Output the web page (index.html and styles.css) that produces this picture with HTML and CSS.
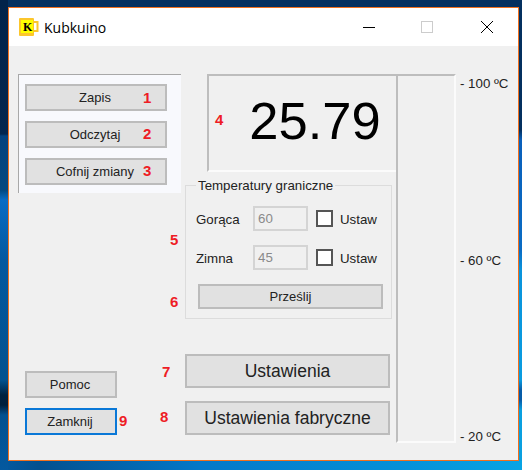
FILE: index.html
```html
<!DOCTYPE html>
<html>
<head>
  <meta charset="UTF-8">
  <title>Kubkuino</title>
  <link rel="stylesheet" href="styles.css">
</head>
<body>
  <div class="window">
    <div class="titlebar">
      <svg class="app-icon" width="20" height="18" viewBox="0 0 20 18">
        <path d="M14 4h4.5v9H14" fill="none" stroke="#fcc62c" stroke-width="2"/>
        <rect x="0" y="0" width="15" height="18" rx="1" fill="#fcc62c"/>
        <rect x="2" y="2" width="12" height="13" fill="#ffff00"/>
      </svg>
      <span class="app-letter">K</span>
      <span class="title">Kubkuino</span>
      <div class="controls">
        <svg width="58" height="14" viewBox="0 0 58 14"><path d="M0 7.5h12" stroke="#000" fill="none"/></svg>
        <svg width="59" height="14" viewBox="0 0 59 14"><rect x="0.5" y="1.5" width="11" height="11" stroke="#ccc" fill="none"/></svg>
        <svg width="14" height="14" viewBox="0 0 14 14"><path d="M1 1l12 12M13 1L1 13" stroke="#000" fill="none"/></svg>
      </div>
    </div>

    <div class="client">
      <div class="left-col">
        <div class="file-panel">
          <button class="btn">Zapis</button>
          <button class="btn">Odczytaj</button>
          <button class="btn">Cofnij zmiany</button>
        </div>
        <div class="help-btns">
          <button class="btn btn-small">Pomoc</button>
          <button class="btn btn-small btn-focus">Zamknij</button>
        </div>
      </div>

      <div class="mid-col">
        <div class="display">25.79</div>
        <fieldset class="limits">
          <legend>Temperatury graniczne</legend>
          <div class="limit-row">
            <label class="row-name">Gorąca</label>
            <div class="fake-input">60</div>
            <span class="check"></span>
            <span class="check-text">Ustaw</span>
          </div>
          <div class="limit-row">
            <label class="row-name">Zimna</label>
            <div class="fake-input">45</div>
            <span class="check"></span>
            <span class="check-text">Ustaw</span>
          </div>
          <button class="btn btn-send">Prześlij</button>
        </fieldset>
        <button class="btn btn-big">Ustawienia</button>
        <button class="btn btn-big">Ustawienia fabryczne</button>
      </div>

      <div class="scale"></div>
      <div class="scale-labels">
        <span>- 100 ºC</span>
        <span>- 60 ºC</span>
        <span>- 20 ºC</span>
      </div>
    </div>

    <!-- red numbers painted over the screenshot -->
    <span class="mark m1">1</span>
    <span class="mark m2">2</span>
    <span class="mark m3">3</span>
    <span class="mark m4">4</span>
    <span class="mark m5">5</span>
    <span class="mark m6">6</span>
    <span class="mark m7">7</span>
    <span class="mark m8">8</span>
    <span class="mark m9">9</span>
  </div>
</body>
</html>
```

FILE: styles.css
```css
html, body {
  margin: 0;
  height: 470px;
  overflow: hidden;
}
/* desktop wallpaper, only the strips round the window show */
body {
  background-color: #04305f;
  background-image:
    linear-gradient(180deg, #02234a 0, #02264e 134px, #03427e 136px, #03487f 190px, #0a6cc4 200px, #04589f 260px, #03528f 380px, #02213f 395px, #021f3c 405px, #03508f 415px, #04599f 470px),
    linear-gradient(90deg, #04599f 0, #03508f 40px, #0478c8 200px, #0590d8 400px, #08a4e4 522px),
    linear-gradient(180deg, #04305f 0, #04305f 130px, #0a60bb 140px, #0a6cc4 250px, #0a94dc 270px, #0a9ce0 380px, #075ca8 390px, #075ca8 400px, #0aa0e0 410px, #0aa0e0 470px);
  background-size: 8px 470px, 522px 9px, 4px 470px;
  background-position: 0 0, 0 461px, 518px 0;
  background-repeat: no-repeat;
  font-family: "Liberation Sans", Arial, sans-serif;
  font-size: 13.3px;
  color: #222;
}
.window {
  position: relative;
  box-sizing: border-box;
  width: 511px;
  height: 454px;
  margin: 7px 0 0 8px;
  border: 1px solid #f0701e;
  background: #f0f0f0;
}

/* title bar */
.titlebar {
  position: relative;
  display: flex;
  align-items: center;
  height: 38px;
  padding-left: 10px;
  background: #fff;
  color: #000;
}
.app-icon {
  margin-right: 5px;
}
.app-letter {
  position: absolute;
  left: 14px;
  top: 12px;
  font-family: "Liberation Serif", serif;
  font-weight: bold;
  font-size: 12px;
}
.title {
  font-family: "Open Sans", sans-serif;
  font-size: 14px;
}
.controls {
  display: flex;
  margin-left: auto;
  margin-right: 24px;
}

/* client area */
.client {
  display: flex;
  height: 414px;
}
.left-col {
  display: flex;
  flex-direction: column;
  width: 176px;
  padding-top: 28px;
  box-sizing: border-box;
}
.file-panel {
  display: flex;
  flex-direction: column;
  gap: 10px;
  box-sizing: border-box;
  width: 163px;
  height: 119px;
  margin-left: 9px;
  padding: 9px 0 0 6px;
  border-top: 1px solid #a8a8a8;
  border-left: 1px solid #a8a8a8;
  background: #f8f9fd;
}
.btn {
  display: block;
  box-sizing: border-box;
  padding: 0;
  border: 2px solid #bcbcbc;
  background: #e1e1e1;
  font-family: inherit;
  font-size: 13px;
  color: #222;
}
.file-panel .btn {
  width: 142px;
  height: 27px;
  padding-right: 2px;
}
.help-btns {
  display: flex;
  flex-direction: column;
  gap: 10px;
  margin: auto 0 0 16px;
  padding-bottom: 25px;
}
.btn-small {
  width: 92px;
  height: 27px;
  padding-right: 2px;
}
.btn-focus {
  border-color: #0a78d7;
}

.mid-col {
  width: 211px;
  padding-top: 28px;
  box-sizing: border-box;
}
.display {
  box-sizing: border-box;
  width: 189px;
  height: 98px;
  margin-left: 22px;
  padding-left: 25px;
  border-top: 2px solid #bdbdbd;
  border-left: 2px solid #bdbdbd;
  border-bottom: 2px solid #fbfbfb;
  font-size: 52.5px;
  line-height: 90px;
  text-align: center;
  color: #000;
}
.limits {
  box-sizing: border-box;
  width: 207px;
  height: 141px;
  margin: 6px 0 0;
  padding: 13px 0 0 10px;
  border: 1px solid #dcdcdc;
}
.limits legend {
  margin-left: 0;
  padding: 0 2px;
  font-size: 13.3px;
}
.limit-row {
  display: flex;
  align-items: center;
  height: 25px;
  margin-bottom: 14px;
}
.row-name {
  width: 57px;
  padding-top: 2px;
}
.check-text {
  padding-top: 2px;
}
.fake-input {
  box-sizing: border-box;
  width: 55px;
  height: 25px;
  margin-right: 8px;
  padding: 3px 0 0 3px;
  border: 2px solid #d4d4d4;
  color: #8a8a8a;
}
.check {
  box-sizing: border-box;
  width: 17px;
  height: 17px;
  margin-right: 7px;
  border: 2px solid #555;
  background: #fff;
}
.btn-send {
  width: 185px;
  height: 25px;
  margin: 1px 0 0 2px;
}
.btn-big {
  width: 205px;
  height: 34px;
  margin-top: 13px;
  font-size: 17.5px;
}
.limits + .btn-big {
  margin-top: 35px;
}

.scale {
  box-sizing: border-box;
  width: 60px;
  height: 369px;
  margin-top: 28px;
  border-top: 2px solid #bdbdbd;
  border-left: 2px solid #bdbdbd;
  border-right: 2px solid #fbfbfb;
  border-bottom: 2px solid #fbfbfb;
}
.scale-labels {
  display: flex;
  flex-direction: column;
  justify-content: space-between;
  height: 368px;
  margin: 30px 0 0 4px;
}

/* annotations */
.mark {
  position: absolute;
  font-weight: bold;
  font-size: 15px;
  line-height: 16px;
  color: #ee1c25;
}
.m1 { left: 134px; top: 82px; }
.m2 { left: 134px; top: 118px; }
.m3 { left: 134px; top: 155px; }
.m4 { left: 206px; top: 104px; }
.m5 { left: 161px; top: 224px; }
.m6 { left: 161px; top: 286px; }
.m7 { left: 153px; top: 356px; }
.m8 { left: 151px; top: 401px; }
.m9 { left: 110px; top: 405px; }
```
